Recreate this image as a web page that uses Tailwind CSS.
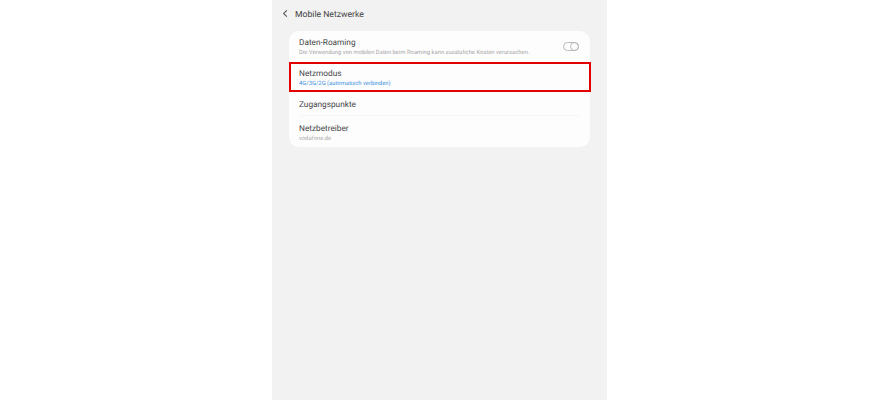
<!DOCTYPE html>
<html>
<head>
<meta charset="utf-8">
<script src="https://cdn.jsdelivr.net/npm/@tailwindcss/browser@4"></script>
</head>
<body class="bg-white font-['Roboto',sans-serif] [text-rendering:geometricPrecision]">
<div class="w-[879px] h-[400px] overflow-hidden flex justify-center">
  <div class="w-[335px] h-full bg-[#f2f2f2] flex flex-col px-[17px]">
    <div class="h-[31px] flex items-start gap-[4px] -ml-[9px] pt-[8px]">
      <svg width="11" height="11" viewBox="0 0 12 12" fill="none" stroke="#444" stroke-width="1.1"><path d="M7.5 2.5 4 6l3.5 3.5"/></svg>
      <span class="text-[8.65px] leading-[12px] pt-[1px] text-[#444]">Mobile Netzwerke</span>
    </div>
    <div class="relative bg-[#fdfdfd] rounded-[10px] flex flex-col">
      <div class="h-[31px] pl-[10px] pr-[11px] flex items-center justify-between">
        <div class="flex flex-col pt-[1px]">
          <span class="text-[8.25px] leading-[12px] text-[#444]">Daten-Roaming</span>
          <span class="text-[5.85px] leading-[7px] mt-[1px] text-[#a6a6a6]">Die Verwendung von mobilen Daten beim Roaming kann zusätzliche Kosten verursachen.</span>
        </div>
        <div class="relative w-[16px] h-[9px] rounded-full border border-[#bbb]"><div class="absolute right-[-1px] top-[-1px] w-[9px] h-[9px] rounded-full border border-[#bbb]"></div></div>
      </div>
      <div class="h-[30px] pl-[10px] pt-[2px] flex flex-col justify-center">
        <span class="text-[8.25px] leading-[12px] text-[#444]">Netzmodus</span>
        <span class="text-[5.85px] leading-[8px] text-[#3a90dc]">4G/3G/2G (automatisch verbinden)</span>
      </div>
      <div class="h-[24px] mx-[10px] pt-[2px] flex items-center border-b border-[#f6f6f6]">
        <span class="text-[8.25px] leading-[12px] text-[#444]">Zugangspunkte</span>
      </div>
      <div class="h-[31px] pl-[10px] pt-[2px] flex flex-col justify-center">
        <span class="text-[8.25px] leading-[12px] text-[#444]">Netzbetreiber</span>
        <span class="text-[5.85px] leading-[8px] text-[#ababab]">vodafone.de</span>
      </div>
      <div class="absolute left-0 right-[-1px] top-[31px] h-[30px] border-2 border-[#e30000]"></div>
    </div>
  </div>
</div>
</body>
</html>
